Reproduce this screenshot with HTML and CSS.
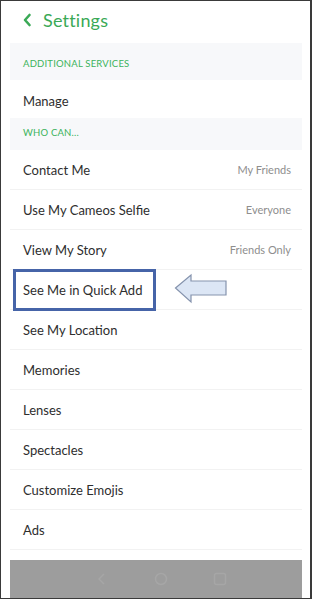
FILE: index.html
```html
<!DOCTYPE html>
<html>
<head>
<meta charset="utf-8">
<link rel="stylesheet" href="styles.css">
</head>
<body>
<div class="frame">
  <div class="header">
    <svg class="back" width="10" height="14" viewBox="0 0 10 14"><path d="M7.5 2 L3 7 L7.5 12" fill="none" stroke="#3aa956" stroke-width="2.6" stroke-linecap="round" stroke-linejoin="round"/></svg>
    <span class="title">Settings</span>
  </div>
  <div class="list">
    <div class="section top">ADDITIONAL SERVICES</div>
    <div class="row first"><span class="label">Manage</span></div>
    <div class="section short">WHO CAN...</div>
    <div class="row"><span class="label">Contact Me</span><span class="value">My Friends</span></div>
    <div class="row"><span class="label">Use My Cameos Selfie</span><span class="value">Everyone</span></div>
    <div class="row"><span class="label">View My Story</span><span class="value">Friends Only</span></div>
    <div class="row marked">
      <span class="label">See Me in Quick Add</span>
      <div class="highlight"></div>
      <svg class="arrow" width="56" height="32" viewBox="0 0 56 32"><path d="M1.5 15 L17 2 L17 8 L52 8 L52 22 L17 22 L17 29 Z" fill="#dce6f5" stroke="#8593ad" stroke-width="1.2" stroke-linejoin="miter"/></svg>
    </div>
    <div class="row"><span class="label">See My Location</span></div>
    <div class="row"><span class="label">Memories</span></div>
    <div class="row"><span class="label">Lenses</span></div>
    <div class="row"><span class="label">Spectacles</span></div>
    <div class="row"><span class="label">Customize Emojis</span></div>
    <div class="row"><span class="label">Ads</span></div>
  </div>
  <div class="bottombar">
    <svg width="14" height="14" viewBox="0 0 14 14"><path d="M9 2 L4 7 L9 12" fill="none" stroke="#a6a6a6" stroke-width="1.5"/></svg>
    <svg width="14" height="14" viewBox="0 0 14 14"><circle cx="7" cy="7" r="5.5" fill="none" stroke="#a6a6a6" stroke-width="1.5"/></svg>
    <svg width="14" height="14" viewBox="0 0 14 14"><rect x="1.5" y="1.5" width="11" height="11" rx="2" fill="none" stroke="#a6a6a6" stroke-width="1.5"/></svg>
  </div>
</div>
</body>
</html>
```
FILE: styles.css
```css
* { box-sizing: border-box; }
html, body { margin: 0; padding: 0; background: #fff; }
body { font-family: Lato, "Open Sans", sans-serif; }
.frame {
  width: 312px;
  height: 599px;
  border: 1px solid #3a3a3a;
  border-right-width: 2px;
  padding: 0 8px 0 9px;
  display: flex;
  flex-direction: column;
  overflow: hidden;
}
.header {
  height: 42px;
  display: flex;
  align-items: center;
  padding-left: 12px;
  padding-bottom: 4px;
  gap: 11px;
}
.title {
  color: #3aa956;
  font-size: 18px;
  letter-spacing: 0.2px;
}
.list { display: flex; flex-direction: column; }
.section {
  height: 37px;
  background: #f7f8fa;
  color: #3bb35a;
  font-size: 9.5px;
  display: flex;
  align-items: center;
  padding-left: 13px;
  letter-spacing: 0.2px;
}
.section.top { padding-top: 3px; }
.section.short { height: 32px; padding-bottom: 3px; }
.row {
  position: relative;
  height: 40px;
  display: flex;
  align-items: center;
  justify-content: space-between;
  padding: 0 11px 0 13px;
  border-bottom: 1px solid #f2f2f2;
}
.row.first { height: 38px; padding-top: 4px; border-bottom: none; }
.label { color: #2e2e2e; font-size: 13px; }
.value { color: #8e8e8e; font-size: 11px; }
.highlight {
  position: absolute;
  left: 3px;
  top: -1px;
  width: 143px;
  height: 42px;
  border: 3px solid #4664a8;
}
.arrow {
  position: absolute;
  left: 164px;
  top: 3px;
}
.bottombar {
  margin-top: auto;
  height: 38px;
  background: #9d9d9d;
  display: flex;
  align-items: center;
  justify-content: center;
  gap: 45px;
  padding-left: 10px;
}
```
